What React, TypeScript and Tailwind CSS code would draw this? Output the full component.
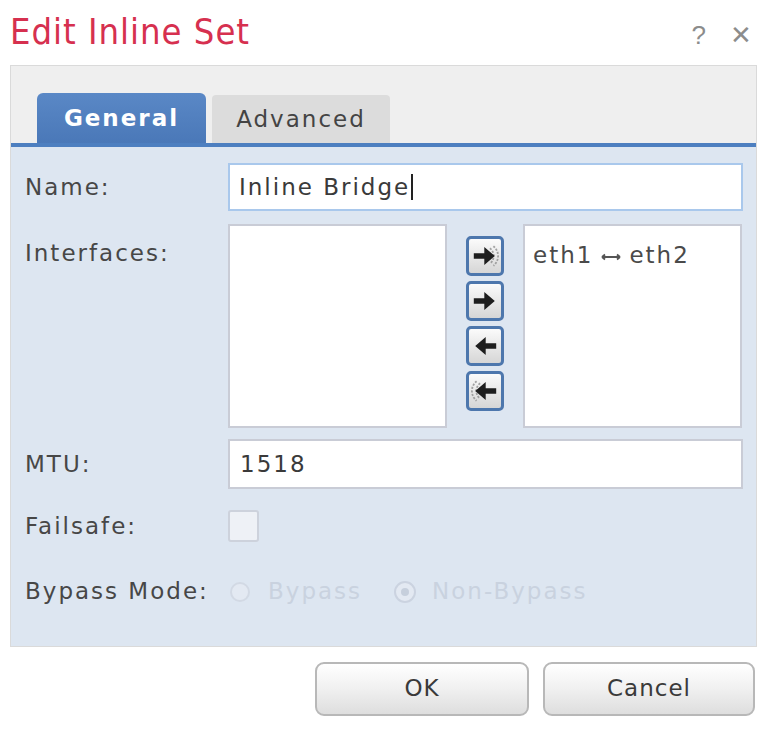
import React from 'react';

const sans = "font-['DejaVu_Sans',Verdana,sans-serif]";

function Arrow({ dir, all }: { dir: 'right' | 'left'; all?: boolean }) {
  const right = 'M2 8h7.5V3.5l7.5 6.5-7.5 6.5V12H2z';
  const left = 'M18 8h-7.5V3.5L3 10l7.5 6.5V12H18z';
  return (
    <svg width="28" height="28" viewBox="0 0 20 20">
      {all && dir === 'right' && (
        <g fill="none" stroke="#a0a0a0" strokeWidth="1.3" strokeDasharray="1.5 1">
          <path d="M13.5 4.5a7 7 0 0 1 0 11" />
          <path d="M16 3a9 9 0 0 1 0 14" />
        </g>
      )}
      {all && dir === 'left' && (
        <g fill="none" stroke="#a0a0a0" strokeWidth="1.3" strokeDasharray="1.5 1">
          <path d="M6.5 4.5a7 7 0 0 0 0 11" />
          <path d="M4 3a9 9 0 0 0 0 14" />
        </g>
      )}
      <path d={dir === 'right' ? right : left} fill="#1e1e1e" />
    </svg>
  );
}

function MoveButton({ dir, all }: { dir: 'right' | 'left'; all?: boolean }) {
  return (
    <button className="w-[38px] h-[40px] rounded-[5px] border-[3px] border-[#4d77ad] bg-gradient-to-b from-[#fbfbfb] to-[#d6d6d6] flex items-center justify-center">
      <Arrow dir={dir} all={all} />
    </button>
  );
}

export default function App() {
  return (
    <div className={`w-[772px] h-[731px] bg-white ${sans}`}>
      {/* header */}
      <div className="h-[65px] flex items-start justify-between pl-[10px] pr-[20px] pt-[10px]">
        <h1 className="text-[36px] leading-[44px] text-[#d6304f] font-['DejaVu_Sans_Condensed','Liberation_Sans_Narrow',sans-serif] tracking-[1px]">
          Edit Inline Set
        </h1>
        <div className="flex gap-[24px] pt-[6px] text-[26px] text-[#8c8c8c] font-['Liberation_Sans',Arial,sans-serif]">
          <span>?</span>
          <span>✕</span>
        </div>
      </div>

      {/* panel */}
      <div className="ml-[10px] mr-[15px] border border-[#dadada]">
        <div className="h-[77px] bg-[#efefef] flex items-end pl-[26px] gap-[6px]">
          <div className="w-[169px] h-[50px] rounded-t-[6px] bg-gradient-to-b from-[#5a88c6] to-[#4a78b8] flex items-center justify-center text-white font-bold text-[23px] tracking-[2px]">
            General
          </div>
          <div className="w-[178px] h-[48px] rounded-t-[4px] bg-[#dcdcdc] flex items-center justify-center text-[#444] text-[23px] tracking-[2px]">
            Advanced
          </div>
        </div>
        <div className="h-[4px] bg-[#4d7fc0]" />

        <div className="bg-[#dde6f1] pl-[14px] pr-[13px] pt-[16px] pb-[38px] text-[23px] tracking-[2px] text-[#474747]">
          {/* Name */}
          <div className="flex items-center">
            <div className="w-[203px]">Name:</div>
            <div className="flex-1 h-[48px] bg-white border-2 border-[#a9c8ec] flex items-center pl-[9px] text-[#3a3a3a]">
              Inline Bridge<span className="w-[2px] h-[26px] bg-[#222] ml-[1px]" />
            </div>
          </div>

          {/* Interfaces */}
          <div className="flex mt-[13px]">
            <div className="w-[203px] pt-[12px]">Interfaces:</div>
            <div className="w-[219px] h-[204px] bg-white border-2 border-[#c9ccd6]" />
            <div className="w-[76px] flex flex-col items-center gap-[5px] pt-[12px]">
              <MoveButton dir="right" all />
              <MoveButton dir="right" />
              <MoveButton dir="left" />
              <MoveButton dir="left" all />
            </div>
            <div className="w-[219px] h-[204px] bg-white border-2 border-[#c9ccd6] pl-[8px] pt-[12px] text-[#4a4a4a] flex items-start">
              <span className="flex items-center">
                eth1
                <svg width="20" height="10" viewBox="0 0 20 10" className="mx-[8px] mt-[4px]">
                  <path d="M1 5h18M1 5l3-2.5M1 5l3 2.5M19 5l-3-2.5M19 5l-3 2.5" stroke="#555" strokeWidth="1.8" fill="none" />
                </svg>
                eth2
              </span>
            </div>
          </div>

          {/* MTU */}
          <div className="flex items-center mt-[11px]">
            <div className="w-[203px]">MTU:</div>
            <div className="flex-1 h-[50px] bg-white border-2 border-[#c9ccd6] flex items-center pl-[10px] text-[#3a3a3a]">
              1518
            </div>
          </div>

          {/* Failsafe */}
          <div className="flex items-center mt-[20px]">
            <div className="w-[203px]">Failsafe:</div>
            <div className="w-[31px] h-[32px] rounded-[3px] border-2 border-[#cdd2dc] bg-[#eef1f6]" />
          </div>

          {/* Bypass mode */}
          <div className="flex items-center mt-[32px] h-[32px]">
            <div className="w-[203px]">Bypass Mode:</div>
            <div className="flex items-center text-[#c9d2df]">
              <span className="w-[20px] h-[20px] rounded-full border-2 border-[#d2d9e4] bg-[#e3e9f2] ml-[2px]" />
              <span className="ml-[18px]">Bypass</span>
              <span className="w-[22px] h-[22px] rounded-full border-2 border-[#cbd3e0] bg-[#e3e9f2] ml-[32px] flex items-center justify-center">
                <span className="w-[8px] h-[8px] rounded-full bg-[#c6cfdc]" />
              </span>
              <span className="ml-[16px]">Non-Bypass</span>
            </div>
          </div>
        </div>
      </div>

      {/* footer buttons */}
      <div className="flex justify-end gap-[14px] pr-[17px] mt-[15px]">
        <button className="w-[214px] h-[54px] rounded-[9px] border-2 border-[#b8b8b8] bg-gradient-to-b from-white via-[#f0f0f0] to-[#dedede] text-[23px] text-[#3a3a3a] tracking-[1px]">
          OK
        </button>
        <button className="w-[212px] h-[54px] rounded-[9px] border-2 border-[#b8b8b8] bg-gradient-to-b from-white via-[#f0f0f0] to-[#dedede] text-[23px] text-[#3a3a3a] tracking-[1px]">
          Cancel
        </button>
      </div>
    </div>
  );
}
